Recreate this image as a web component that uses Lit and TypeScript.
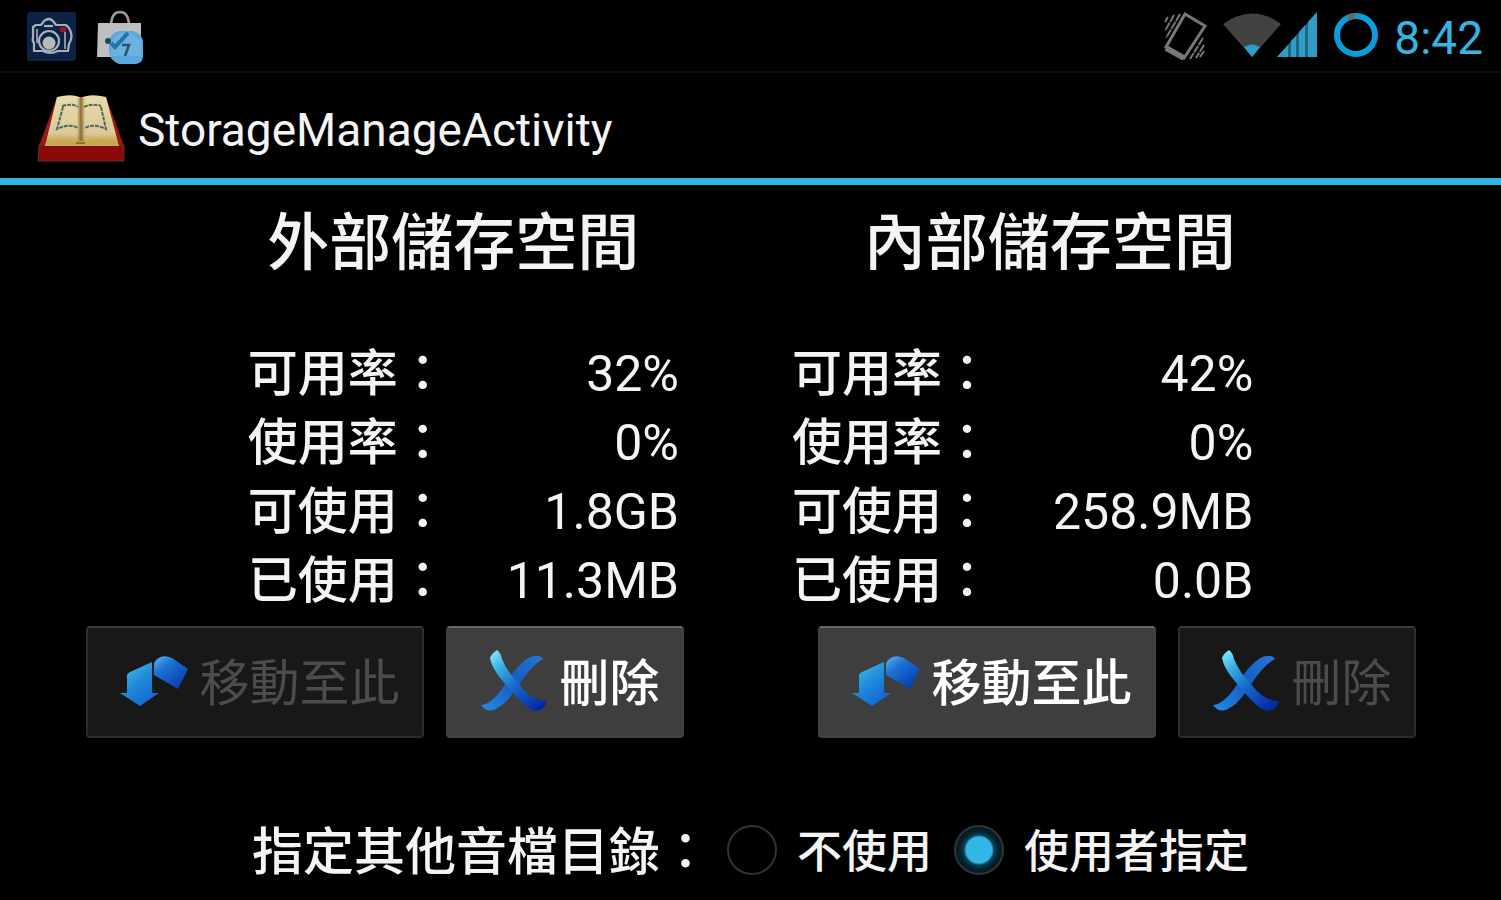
import { LitElement, html, css, svg } from "lit";
import { customElement, property, state } from "lit/decorators.js";

interface Storage {
  id: string;
  title: string;
  rows: [string, string][];
  canMove: boolean;
  canDelete: boolean;
}

const STORAGES: Storage[] = [
  {
    id: "external",
    title: "外部儲存空間",
    rows: [["可用率：", "32%"], ["使用率：", "0%"], ["可使用：", "1.8GB"], ["已使用：", "11.3MB"]],
    canMove: false,
    canDelete: true,
  },
  {
    id: "internal",
    title: "內部儲存空間",
    rows: [["可用率：", "42%"], ["使用率：", "0%"], ["可使用：", "258.9MB"], ["已使用：", "0.0B"]],
    canMove: true,
    canDelete: false,
  },
];

@customElement("status-bar")
export class StatusBar extends LitElement {
  static styles = css`
    :host {
      display: flex;
      align-items: center;
      justify-content: space-between;
      height: 73px;
      box-sizing: border-box;
      border-bottom: 2px solid #0d0d0d;
      padding: 0 18px 0 26px;
    }
    .group { display: flex; align-items: center; }
    .notices { gap: 20px; }
    .clock { color: #33b5e5; font-size: 46px; line-height: 56px; padding: 4px 0 0 12px; }
    svg { display: block; }
  `;

  render() {
    return html`
      <div class="group notices">
        <svg width="51" height="52" viewBox="0 0 51 52" aria-hidden="true">
          <rect x="1" y="2" width="49" height="49" rx="3" fill="#0d2345" />
          <g fill="none" stroke="#a9b0ba" stroke-width="2.2" stroke-linejoin="round">
            <path d="M7 17l3-2h5l3-4q5-4 9 0l3 4h10l3 3q5 8 0 16l-1 7H32q-8 4-15 0H8V33q-2-2-1-5z" />
            <path d="M11 19v14M39 22v17" stroke-width="1.6" />
            <path d="M18 16h9" />
            <circle cx="23" cy="31" r="10" />
          </g>
          <circle cx="23" cy="33" r="6.500" fill="#b9bab6" />
          <rect x="34" y="17" width="6" height="5" fill="#971627" />
        </svg>
        <svg width="50" height="56" viewBox="0 0 50 56" aria-hidden="true">
          <path d="M14 16Q15 4 23 4T32 16" fill="none" stroke="#999" stroke-width="2.5" />
          <path d="M1 15h43v34H0z" fill="#bebebe" />
          <path d="M22 23h14q11 3 10 14v12q-1 7-8 7H22q-10-4-10-14V33q2-8 10-10z" fill="#5ba8dc" />
          <path d="M14 48V33l9-8h10l11 7v16z" fill="#7fb9e0" opacity=".5" />
          <path d="M14 35l4 4 13-14" fill="none" stroke="#2474ac" stroke-width="4" />
          <circle cx="11" cy="33" r="3" fill="#254455" />
          <path d="M25 37h7l-4 11" fill="none" stroke="#29536f" stroke-width="2.5" />
        </svg>
      </div>
      <div class="group">
        <svg width="220" height="60" viewBox="1162 6 220 60" aria-hidden="true">
          <g fill="none" stroke="#777" stroke-width="2">
            <path d="M1185 14l20 12-21 32-18-11z" stroke-width="3" />
            <path d="M1166 48l18 10" stroke-width="6" />
            <path d="M1180 14l-14 24M1174 15l-9 16M1168 17l-3 5M1203 38l-13 21M1204 45l-8 13M1204 51l-4 6" stroke-dasharray="8 1" />
          </g>
          <path d="M1223 24Q1252 3 1281 24L1252 57z" fill="#424242" />
          <path d="M1244 47q8-5 16 0l-8 10z" fill="#2d9ecb" />
          <path d="M1277 57l40-45v45z" fill="#1c6786" />
          <path d="M1277 57l11-12v12zM1291 41l5-5v21h-5zM1299 32l6-7v32h-6zM1308 22l9-10v45h-9z" fill="#319dc5" />
          <circle cx="1356" cy="35" r="19" fill="none" stroke="#0b9dd9" stroke-width="6" />
          <path d="M1348 18q4-2 7-2" fill="none" stroke="#626b70" stroke-width="6" />
        </svg>
        <time class="clock">8:42</time>
      </div>
    `;
  }
}

@customElement("action-button")
export class ActionButton extends LitElement {
  @property() icon: "move" | "delete" = "move";
  @property() label = "";
  @property({ type: Boolean }) disabled = false;

  static styles = css`
    :host { display: block; }
    .button {
      display: flex;
      align-items: center;
      gap: 12px;
      height: 112px;
      box-sizing: border-box;
      margin: 0;
      padding: 0 22px 0 32px;
      border: 2px solid #424242;
      border-top-color: #696969;
      border-radius: 4px;
      background: #3e3e3e;
      color: #fff;
      font: inherit;
      font-size: 50px;
      font-weight: 500;
      line-height: 64px;
      white-space: nowrap;
    }
    .button:disabled {
      background: #181818;
      border-color: #2d2d2d;
      border-top-color: #3a3a3a;
      color: #4c4c4c;
      font-weight: 400;
    }
    .icon { display: block; flex: none; }
    .text { padding-top: 3px; }
  `;

  private glyph() {
    return this.icon === "move"
      ? svg`
        <defs>
          <linearGradient id="a" x1="0" y1="0" x2=".7" y2="1"><stop offset="0" stop-color="#53cbee" /><stop offset=".5" stop-color="#218ed9" /><stop offset="1" stop-color="#1264d1" /></linearGradient>
          <linearGradient id="b" x1="0" y1="0" x2=".8" y2="1"><stop offset="0" stop-color="#66b5ed" /><stop offset=".35" stop-color="#1b73d5" /><stop offset="1" stop-color="#0638aa" /></linearGradient>
        </defs>
        <path d="M7 28Q6 24 10 22L32 12V43h7L20 56 0 43h7z" fill="url(#a)" />
        <path d="M34 13Q40 3 52 8L68 19 58 39 34 25z" fill="url(#b)" />`
      : svg`
        <defs>
          <linearGradient id="c" gradientUnits="userSpaceOnUse" x1="10" y1="2" x2="58" y2="60"><stop offset="0" stop-color="#83f0fa" /><stop offset=".25" stop-color="#39aee5" /><stop offset=".55" stop-color="#1769cc" /><stop offset="1" stop-color="#0527a3" /></linearGradient>
          <linearGradient id="d" gradientUnits="userSpaceOnUse" x1="4" y1="58" x2="60" y2="8"><stop offset="0" stop-color="#2388df" /><stop offset=".5" stop-color="#145cc5" /><stop offset="1" stop-color="#2673cd" /></linearGradient>
        </defs>
        <path d="M1 55Q12 54 24 36 36 16 48 8 59 3 63 9 52 15 40 33 27 53 19 57 8 65 1 55z" fill="url(#d)" />
        <path d="M10 8Q12 3 17 0 21 3 22 9 27 22 39 34 51 51 67 51 65 60 56 61 46 60 28 37 12 20 10 8z" fill="url(#c)" />`;
  }

  render() {
    return html`
      <button class="button" type="button" ?disabled=${this.disabled}>
        <svg class="icon" width="68" height="64" viewBox="0 0 68 64" aria-hidden="true">${this.glyph()}</svg>
        <span class="text">${this.label}</span>
      </button>
    `;
  }
}

@customElement("app-root")
export class AppRoot extends LitElement {
  @state() private folder = "custom";

  static styles = css`
    :host {
      display: block;
      min-height: 100vh;
      background: #000;
      color: #f4f4f4;
      font-family: Roboto, "Noto Sans CJK TC", sans-serif;
    }
    .bar {
      display: flex;
      align-items: center;
      gap: 12px;
      height: 112px;
      box-sizing: border-box;
      padding: 4px 36px 0;
      border-bottom: 7px solid #33b5e5;
    }
    .book { display: block; flex: none; }
    .title { margin: 0; padding-top: 4px; font-size: 46px; line-height: 60px; font-weight: 400; }
    .names {
      display: grid;
      grid-template-columns: 1fr 1fr;
      padding: 13px 153px 0 155px;
      text-align: center;
    }
    .name { margin: 0; font-size: 62px; line-height: 92px; font-weight: 500; }
    .stats {
      display: grid;
      grid-template-columns: 43fr 46fr;
      column-gap: 113px;
      width: 67%;
      margin: 50px auto 0;
    }
    .table { width: 100%; border-collapse: collapse; font-size: 50px; line-height: 69px; }
    .table th, .table td { padding: 0; height: 69px; white-space: nowrap; }
    .table th { text-align: left; font-weight: 500; }
    .table td { text-align: right; font-weight: 400; }
    .actions { display: flex; justify-content: center; gap: 134px; margin-top: 10px; }
    .pair { display: flex; gap: 22px; }
    .folder {
      display: flex;
      align-items: center;
      justify-content: center;
      margin-top: 73px;
      font-weight: 500;
    }
    .legend { padding-top: 6px; font-size: 51px; line-height: 72px; }
    .choice { display: flex; align-items: center; gap: 20px; font-size: 45px; line-height: 72px; }
    .choice + .choice { margin-left: 22px; }
    .legend + .choice { margin-left: 16px; }
    .caption { padding-top: 6px; }
    .radio {
      appearance: none;
      flex: none;
      width: 50px;
      height: 50px;
      box-sizing: border-box;
      margin: 0;
      border: 2px solid #333;
      border-radius: 50%;
      background: #000;
    }
    .radio:checked {
      background: radial-gradient(circle, #33b5e5 0 13px, #0a4258 15px, #06222e 19px, #041820 24px);
    }
  `;

  private choice(value: string, label: string) {
    return html`
      <label class="choice">
        <input
          class="radio"
          type="radio"
          name="folder"
          value=${value}
          .checked=${this.folder === value}
          @change=${() => (this.folder = value)}
        />
        <span class="caption">${label}</span>
      </label>
    `;
  }

  render() {
    return html`
      <status-bar></status-bar>
      <header class="bar">
        <svg class="book" width="90" height="70" viewBox="36 93 90 70" aria-hidden="true">
          <defs>
            <linearGradient id="page" x1="0" y1="0" x2="0" y2="1"><stop offset="0" stop-color="#e8dcac" /><stop offset=".75" stop-color="#dac995" /><stop offset="1" stop-color="#b99435" /></linearGradient>
            <linearGradient id="fold" x1="0" x2="1"><stop offset="0" stop-color="#8b6a30" stop-opacity="0" /><stop offset=".5" stop-color="#8b6a30" /><stop offset="1" stop-color="#8b6a30" stop-opacity="0" /></linearGradient>
          </defs>
          <path d="M57 97h49l18 49H39z" fill="#9b1812" />
          <path d="M39 145h85v16H38z" fill="#8c0909" stroke="#5f302b" stroke-width="1" />
          <path d="M57 97Q73 93 81 98 90 93 106 97L119 146H45z" fill="url(#page)" />
          <path d="M46 142q19-6 35 1 19-7 36-1l2 4H45z" fill="#c9a74e" />
          <path d="M77 98h8v43h-8z" fill="url(#fold)" />
          <path d="M62 106q11-3 16 1M84 107q7-4 17-1M63 107l-6 22q13-6 21-1M101 107l5 22q-13-6-21-1" fill="none" stroke="#536663" stroke-width="2" stroke-dasharray="4 1" />
          <path d="M76 143h9" stroke="#8b7430" stroke-width="2" />
        </svg>
        <h1 class="title">StorageManageActivity</h1>
      </header>
      <main>
        <div class="names">
          ${STORAGES.map((s) => html`<h2 class="name" id=${s.id}>${s.title}</h2>`)}
        </div>
        <div class="stats">
          ${STORAGES.map(
            (s) => html`
              <table class="table" aria-labelledby=${s.id}>
                <tbody>
                  ${s.rows.map(([k, v]) => html`<tr><th scope="row">${k}</th><td>${v}</td></tr>`)}
                </tbody>
              </table>
            `
          )}
        </div>
        <div class="actions">
          ${STORAGES.map(
            (s) => html`
              <div class="pair" role="group" aria-labelledby=${s.id}>
                <action-button icon="move" label="移動至此" ?disabled=${!s.canMove}></action-button>
                <action-button icon="delete" label="刪除" ?disabled=${!s.canDelete}></action-button>
              </div>
            `
          )}
        </div>
        <div class="folder" role="radiogroup" aria-labelledby="folder-label">
          <span class="legend" id="folder-label">指定其他音檔目錄：</span>
          ${this.choice("none", "不使用")} ${this.choice("custom", "使用者指定")}
        </div>
      </main>
    `;
  }
}
